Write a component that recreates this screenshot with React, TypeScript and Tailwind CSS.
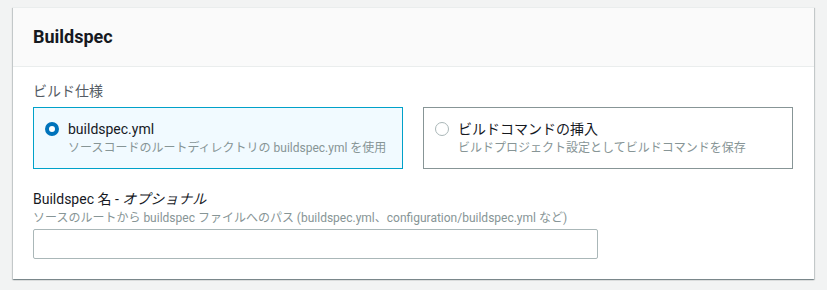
import React from "react";

const font = {
  fontFamily: 'Roboto, "Noto Sans CJK JP", sans-serif',
};

function Radio({ checked }: { checked: boolean }) {
  return checked ? (
    <span className="mt-[4px] inline-block h-[14px] w-[14px] shrink-0 rounded-full border-[4px] border-[#0073bb] bg-white" />
  ) : (
    <span className="mt-[4px] inline-block h-[14px] w-[14px] shrink-0 rounded-full border border-[#aab7b8] bg-white" />
  );
}

function Tile({
  checked,
  title,
  desc,
}: {
  checked: boolean;
  title: string;
  desc: string;
}) {
  return (
    <div
      className={
        checked
          ? "flex h-[62px] gap-[9px] border border-[#00a1c9] bg-[#f1faff] px-[11px] pt-[10px]"
          : "flex h-[62px] gap-[9px] border border-[#879596] bg-white px-[11px] pt-[10px]"
      }
    >
      <Radio checked={checked} />
      <div className="flex flex-col">
        <div className="text-[14px] leading-[22px] text-[#16191f]">{title}</div>
        <div className="text-[12px] leading-[16px] text-[#879596]">{desc}</div>
      </div>
    </div>
  );
}

export default function App() {
  return (
    <div className="h-[290px] w-[827px] bg-[#f2f3f3] pl-[13px] pt-[7px]" style={font}>
      <div className="w-[801px] border-t border-[#eaeded] bg-white shadow-[0_1px_1px_0_rgba(0,28,36,0.3),1px_1px_1px_0_rgba(0,28,36,0.15),-1px_1px_1px_0_rgba(0,28,36,0.15)]">
        <div className="flex h-[59px] items-center border-b border-[#eaeded] bg-[#fafafa] px-[20px]">
          <h2 className="text-[18px] font-bold leading-[24px] text-[#16191f]">Buildspec</h2>
        </div>
        <div className="px-[20px] pb-[20px] pt-[13px]">
          <div className="text-[14px] leading-[22px] text-[#545b64]">ビルド仕様</div>
          <div className="mt-[5px] grid w-[760px] grid-cols-2 gap-[20px]">
            <Tile
              checked
              title="buildspec.yml"
              desc="ソースコードのルートディレクトリの buildspec.yml を使用"
            />
            <Tile
              checked={false}
              title="ビルドコマンドの挿入"
              desc="ビルドプロジェクト設定としてビルドコマンドを保存"
            />
          </div>
          <div className="mt-[19px] text-[14px] leading-[22px] text-[#16191f]">
            Buildspec 名 - <i>オプショナル</i>
          </div>
          <div className="text-[12px] leading-[16px] text-[#879596]">
            ソースのルートから buildspec ファイルへのパス (buildspec.yml、configuration/buildspec.yml など)
          </div>
          <input
            type="text"
            className="mt-[3px] block h-[30px] w-[565px] rounded-[2px] border border-[#aab7b8] bg-white px-2 text-[14px] outline-none"
          />
        </div>
      </div>
    </div>
  );
}
